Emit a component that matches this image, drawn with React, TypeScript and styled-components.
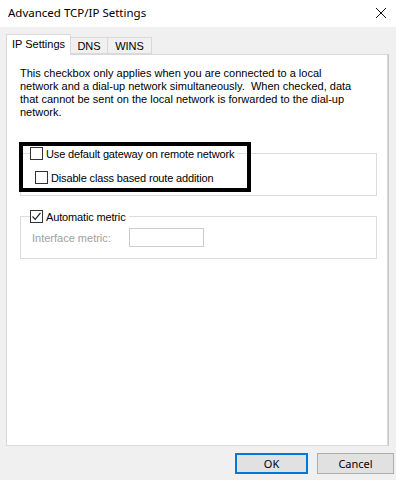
import React from 'react';
import styled, { createGlobalStyle } from 'styled-components';

const GlobalStyle = createGlobalStyle`
  html, body {
    margin: 0;
    padding: 0;
    background: #f0f0f0;
  }
  * {
    box-sizing: border-box;
  }
`;

const Window = styled.div`
  width: 396px;
  height: 480px;
  background-color: #f0f0f0;
  display: flex;
  flex-direction: column;
  font-family: 'Liberation Sans', Arial, sans-serif;
  font-size: 11px;
  color: #000;
  overflow: hidden;
`;

const TitleBar = styled.div`
  height: 27px;
  background-color: #fff;
  display: flex;
  align-items: center;
  justify-content: space-between;
  padding: 0 8px 2px 8px;
`;

const Title = styled.div`
  font-family: 'Noto Sans', 'Open Sans', sans-serif;
  font-size: 11.5px;
  color: #000;
`;

const CloseButton = styled.div`
  width: 12px;
  height: 12px;
  margin-right: 1px;
  display: flex;
`;

const Body = styled.div`
  padding: 7px 8px 0 6px;
  display: flex;
  flex-direction: column;
`;

const TabStrip = styled.div`
  display: flex;
  align-items: flex-end;
  height: 21px;
  position: relative;
  z-index: 1;
  margin-bottom: -1px;
`;

const Tab = styled.div<{ $active?: boolean; $width: number }>`
  width: ${(p) => p.$width}px;
  height: ${(p) => (p.$active ? 21 : 17)}px;
  margin-bottom: ${(p) => (p.$active ? 0 : 1)}px;
  background-color: ${(p) => (p.$active ? '#fff' : '#f0f0f0')};
  border: 1px solid #d9d9d9;
  border-bottom: ${(p) => (p.$active ? 'none' : '1px solid #d9d9d9')};
  border-left: ${(p) => (p.$active ? '1px solid #d9d9d9' : 'none')};
  display: flex;
  align-items: center;
  justify-content: center;
  padding-bottom: ${(p) => (p.$active ? 2 : 0)}px;
  font-size: 11px;
`;

const Panel = styled.div`
  height: 392px;
  background-color: #fff;
  border: 1px solid #d9d9d9;
  box-shadow: 1px 0 0 #c8c8c8;
  padding: 12px 10px 0 13px;
  display: flex;
  flex-direction: column;
`;

const Description = styled.p`
  margin: 0 0 34px 0;
  line-height: 13px;
  white-space: nowrap;
`;

const GroupBox = styled.div<{ $height: number }>`
  position: relative;
  height: ${(p) => p.$height}px;
  border: 1px solid #dcdcdc;
  padding: 0 0 0 9px;
  display: flex;
  flex-direction: column;
  margin-bottom: 20px;
`;

const GroupHeader = styled.div`
  display: inline-flex;
  align-self: flex-start;
  align-items: center;
  gap: 3px;
  margin-top: -7px;
  height: 13px;
  padding-right: 3px;
  background-color: #fff;
`;

const CheckRow = styled.div<{ $indent?: number; $top?: number }>`
  display: flex;
  align-items: center;
  gap: 3px;
  height: 13px;
  margin-left: ${(p) => p.$indent || 0}px;
  margin-top: ${(p) => p.$top || 0}px;
`;

const CheckLabel = styled.span`
  letter-spacing: -0.15px;
`;

const Box = styled.div`
  width: 13px;
  height: 13px;
  border: 1px solid #333;
  background-color: #fff;
  display: flex;
  align-items: center;
  justify-content: center;
  flex-shrink: 0;
`;

const FieldRow = styled.div`
  display: flex;
  align-items: center;
  margin: 5px 0 0 2px;
`;

const DisabledLabel = styled.span`
  color: #a0a0a0;
  width: 97px;
`;

const DisabledInput = styled.div`
  width: 75px;
  height: 19px;
  border: 1px solid #cccccc;
  background-color: #fff;
`;

const Highlight = styled.div`
  position: absolute;
  left: -2px;
  top: -12px;
  width: 232px;
  height: 50px;
  border: 4px solid #000;
  pointer-events: none;
`;

const ButtonRow = styled.div`
  display: flex;
  justify-content: flex-end;
  gap: 9px;
  padding: 7px 2px 0 0;
`;

const Button = styled.div<{ $primary?: boolean; $width: number }>`
  width: ${(p) => p.$width}px;
  height: 21px;
  background-color: #e1e1e1;
  border: ${(p) => (p.$primary ? '2px solid #0078d7' : '1px solid #adadad')};
  display: flex;
  align-items: center;
  justify-content: center;
  font-family: 'Noto Sans', 'Open Sans', sans-serif;
  font-size: 11px;
`;

const Checkbox: React.FC<{ checked?: boolean }> = ({ checked }) => (
  <Box>
    {checked && (
      <svg width="11" height="11" viewBox="0 0 11 11">
        <path d="M1.5 5.5 L4.2 8.3 L9.5 1.8" fill="none" stroke="#222" strokeWidth="1.2" />
      </svg>
    )}
  </Box>
);

const App: React.FC = () => {
  return (
    <>
      <GlobalStyle />
      <Window>
        <TitleBar>
          <Title>Advanced TCP/IP Settings</Title>
          <CloseButton>
            <svg width="12" height="12" viewBox="0 0 12 12">
              <path d="M1 1 L11 11 M11 1 L1 11" stroke="#111" strokeWidth="1" />
            </svg>
          </CloseButton>
        </TitleBar>
        <Body>
          <TabStrip>
            <Tab $active $width={65}>IP Settings</Tab>
            <Tab $width={37}>DNS</Tab>
            <Tab $width={44}>WINS</Tab>
          </TabStrip>
          <Panel>
            <Description>
              This checkbox only applies when you are connected to a local
              <br />
              network and a dial-up network simultaneously.&nbsp; When checked, data
              <br />
              that cannot be sent on the local network is forwarded to the dial-up
              <br />
              network.
            </Description>
            <GroupBox $height={43}>
              <GroupHeader>
                <Checkbox />
                <CheckLabel>Use default gateway on remote network</CheckLabel>
              </GroupHeader>
              <CheckRow $indent={5} $top={11}>
                <Checkbox />
                <CheckLabel>Disable class based route addition</CheckLabel>
              </CheckRow>
              <Highlight />
            </GroupBox>
            <GroupBox $height={43}>
              <GroupHeader>
                <Checkbox checked />
                <CheckLabel>Automatic metric</CheckLabel>
              </GroupHeader>
              <FieldRow>
                <DisabledLabel>Interface metric:</DisabledLabel>
                <DisabledInput />
              </FieldRow>
            </GroupBox>
          </Panel>
        </Body>
        <ButtonRow>
          <Button $primary $width={73}>OK</Button>
          <Button $width={77}>Cancel</Button>
        </ButtonRow>
      </Window>
    </>
  );
};

export default App;
